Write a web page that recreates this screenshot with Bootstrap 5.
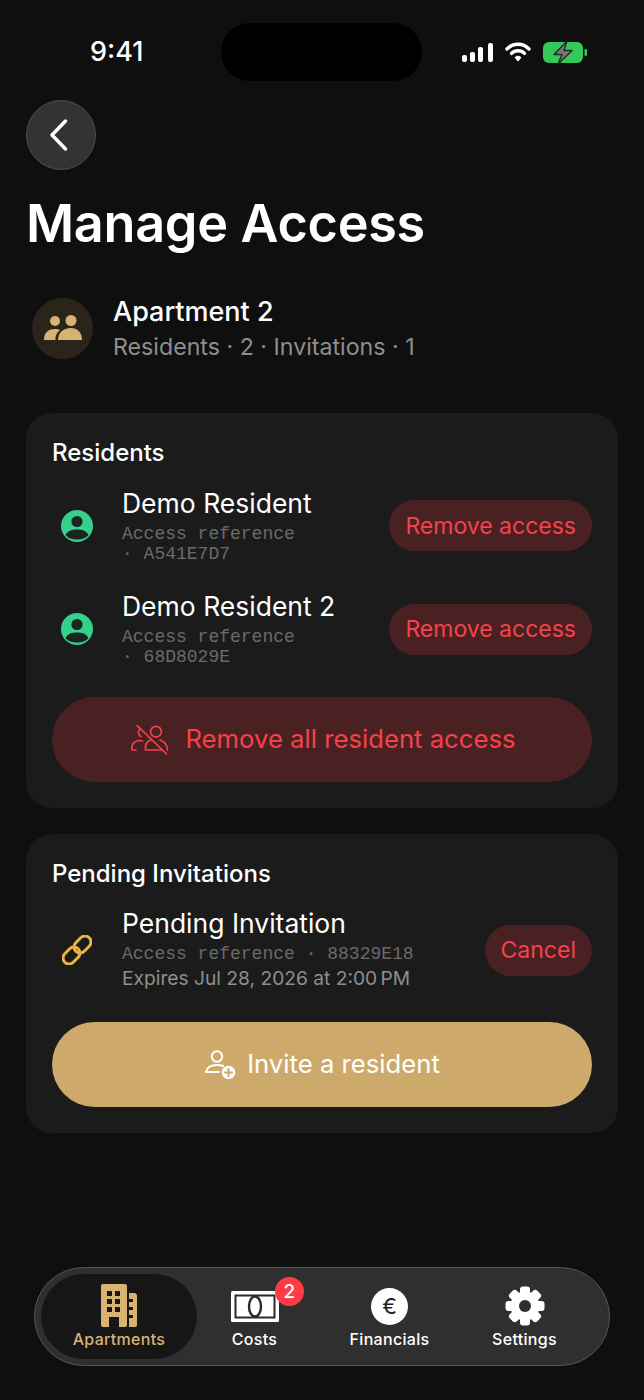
<!DOCTYPE html>
<html lang="en">
<head>
  <meta charset="UTF-8" />
  <meta name="viewport" content="width=device-width, initial-scale=1.0"/>
  <title>Manage Access</title>
  <link href="https://cdn.jsdelivr.net/npm/bootstrap@5.3.0/dist/css/bootstrap.min.css" rel="stylesheet"/>
  <style>
    body {
      background-color: #0f0f0f;
      font-family: Inter, "Liberation Sans", sans-serif;
      color: #fff;
    }
    .phone-page { width: 644px; height: 1400px; overflow: hidden; }
    .status-row { height: 100px; padding: 23px 0 0 90px; }
    .status-time { width: 131px; height: 58px; line-height: 58px; font-size: 27px; font-weight: 500; }
    .status-island { width: 201px; height: 58px; background: #000; border-radius: 29px; }
    .status-icons { margin-left: 40px; height: 58px; gap: 12px; }
    .back-btn {
      width: 70px; height: 70px; margin-left: 26px; padding: 0 4px 0 0;
      background: #333; border: 1.5px solid #4e4e4e; border-radius: 50%;
    }
    .back-btn:hover { background: #333; border-color: #4e4e4e; }
    .page-title { font-size: 52.2px; line-height: 60px; font-weight: 600; margin: 23px 0 0 26px; letter-spacing: -.3px; color: #fff; }
    .apt-row { margin: 44px 0 0 32px; gap: 20px; height: 62px; }
    .apt-circle { width: 61px; height: 61px; background: #2a241b; border-radius: 50%; }
    .apt-text { padding-top: 1px; }
    .apt-name { font-size: 27px; line-height: 32px; font-weight: 500; }
    .apt-sub { font-size: 23.2px; line-height: 30px; margin-top: 4px; color: #8e8e8e; }
    .panel {
      margin: 0 26px; padding: 26px; background: #1b1b1b; border: 0; border-radius: 26px; color: #fff;
    }
    .panel-first { margin-top: 54px; height: 395px; }
    .panel-second { margin-top: 26px; height: 299px; }
    .panel-title { font-size: 24px; line-height: 28px; font-weight: 500; margin: 0 0 7px; }
    .access-row { height: 103.5px; gap: 20px; }
    .access-row .flex-grow-1 { padding-bottom: 1px; }
    .access-row-tall { height: 111px; }
    .access-icon { width: 50px; flex: none; }
    .access-name { font-size: 26.5px; line-height: 32px; margin-bottom: 5px; }
    .access-row-tall .flex-grow-1 { padding-bottom: 2px; }
    .access-ref {
      font-family: "Liberation Mono", monospace; font-size: 18px; line-height: 20px; color: #6a6a6a;
    }
    .access-exp { font-size: 19.2px; line-height: 25px; margin-top: 2px; color: #8e8e8e; }
    .danger-pill {
      height: 51px; padding: 0 16px; border: 0; border-radius: 26px; background: #4a2123; color: #f5424a;
      font-size: 23px; white-space: nowrap; flex: none;
    }
    .danger-pill:hover { background: #4a2123; color: #f5424a; }
    .wide-pill {
      height: 85px; border: 0; border-radius: 43px; font-size: 25.7px; gap: 16px;
    }
    .wide-danger, .wide-danger:hover { background: #4a2123; color: #f5424a; padding-left: 15px; }
    .wide-gold, .wide-gold:hover { background: #cdaa6b; color: #fff; gap: 11px; margin-top: 17px; }
    .tab-wrap { margin: auto 34px 34px; height: 99px; padding: 6px; background: #2f2f2f; border: 1.5px solid #555; border-radius: 50px; }
    .tab-item { position: relative; height: 100%; font-size: 16px; font-weight: 500; letter-spacing: .3px; color: #fff; padding-bottom: 10px; }
    .tab-active { width: 156px; background: #161616; border-radius: 43px; color: #d8b271; }
    .tab-plain { width: 135px; }
    .tab-shift { margin-left: -10px; }
    .tab-icon { height: 44px; margin-bottom: 1px; }
    .tab-label { line-height: 20px; }
    .tab-badge {
      position: absolute; top: 3px; left: 88px; width: 29px; height: 29px; padding: 0; line-height: 29px;
      background: #ff3b45; border-radius: 50%; font-size: 19px; font-weight: 500;
    }
    .euro-circle {
      width: 37px; height: 37px; background: #fff; border-radius: 50%; color: #222; font-size: 22px; font-weight: 400; line-height: 37px; letter-spacing: 0;
    }
  </style>
</head>
<body>
  <div class="phone-page d-flex flex-column">
    <div class="status-row d-flex">
      <div class="status-time">9:41</div>
      <div class="status-island"></div>
      <div class="status-icons d-flex align-items-center">
        <svg width="31" height="20" viewBox="0 0 31 20" fill="#fff">
          <rect x="0" y="13" width="5" height="7" rx="2"/>
          <rect x="8" y="10" width="5" height="10" rx="2"/>
          <rect x="16" y="5" width="5" height="15" rx="2"/>
          <rect x="26" y="1" width="5" height="19" rx="2"/>
        </svg>
        <svg width="26" height="20" viewBox="0 0 26 20" fill="none" stroke="#fff" stroke-width="3.4" stroke-linecap="round">
          <path d="M2 7 C8 .6 18 .6 24 7"/>
          <path d="M6.5 11.4 C10 7.8 16 7.8 19.5 11.4"/>
          <path d="M13 18.4 L10.6 15.6 C12 14.4 14 14.4 15.4 15.6 Z" fill="#fff" stroke-width="1.6" stroke-linejoin="round"/>
        </svg>
        <svg width="44" height="23" viewBox="0 0 44 23">
          <rect x="0" y="1" width="40" height="21" rx="6" fill="#34c759"/>
          <rect x="41.5" y="8" width="2.5" height="7" rx="1.2" fill="#34c759"/>
          <path d="M24 0 L11 13.5 H19 L15 23 L29 9.5 H21 Z" fill="#77797a" stroke="#1d2a20" stroke-width="1.4" stroke-linejoin="round"/>
        </svg>
      </div>
    </div>

    <div>
      <button class="btn back-btn d-flex align-items-center justify-content-center" type="button" aria-label="Back">
        <svg width="20" height="32" viewBox="0 0 20 32" fill="none" stroke="#fff" stroke-width="3.4" stroke-linecap="round" stroke-linejoin="round">
          <path d="M16.5 2 L3 16 L16.5 30"/>
        </svg>
      </button>
    </div>

    <h1 class="page-title">Manage Access</h1>

    <div class="apt-row d-flex align-items-center">
      <div class="apt-circle d-flex align-items-center justify-content-center">
        <svg width="38" height="26" viewBox="0 0 38 26" fill="#d8b271">
          <circle cx="11" cy="6" r="5"/>
          <circle cx="27" cy="5.5" r="5.5"/>
          <path d="M0 25 C0 17 5 14 11 14 C13 14 15 14.5 16 15 C12.5 18 11 21 11.5 25 Z"/>
          <path d="M14 25 C14 17 20 13 27 13 C33 13 38 17 38 25 Z"/>
        </svg>
      </div>
      <div class="apt-text">
        <div class="apt-name">Apartment 2</div>
        <div class="apt-sub">Residents · 2 · Invitations · 1</div>
      </div>
    </div>

    <div class="card panel panel-first">
      <h2 class="panel-title">Residents</h2>
      <div class="access-row d-flex align-items-center">
        <div class="access-icon d-flex justify-content-center">
          <svg width="32" height="32" viewBox="0 0 32 32">
            <circle cx="16" cy="16" r="16" fill="#34d08c"/>
            <circle cx="16" cy="11.5" r="5.6" fill="#1b2420"/>
            <path d="M4.5 25 C7 20.5 11 19.5 16 19.5 C21 19.5 25 20.5 27.5 25 C24.5 28.5 20.5 29.5 16 29.5 C11.5 29.5 7.5 28.5 4.5 25 Z" fill="#1b2420"/>
          </svg>
        </div>
        <div class="flex-grow-1">
          <div class="access-name">Demo Resident</div>
          <div class="access-ref">Access reference<br>· A541E7D7</div>
        </div>
        <button class="btn danger-pill" type="button">Remove access</button>
      </div>
      <div class="access-row d-flex align-items-center">
        <div class="access-icon d-flex justify-content-center">
          <svg width="32" height="32" viewBox="0 0 32 32">
            <circle cx="16" cy="16" r="16" fill="#34d08c"/>
            <circle cx="16" cy="11.5" r="5.6" fill="#1b2420"/>
            <path d="M4.5 25 C7 20.5 11 19.5 16 19.5 C21 19.5 25 20.5 27.5 25 C24.5 28.5 20.5 29.5 16 29.5 C11.5 29.5 7.5 28.5 4.5 25 Z" fill="#1b2420"/>
          </svg>
        </div>
        <div class="flex-grow-1">
          <div class="access-name">Demo Resident 2</div>
          <div class="access-ref">Access reference<br>· 68D8029E</div>
        </div>
        <button class="btn danger-pill" type="button">Remove access</button>
      </div>
      <button class="btn wide-pill wide-danger d-flex align-items-center justify-content-center w-100 mt-3" type="button">
        <svg width="38" height="30" viewBox="0 0 38 30" fill="none" stroke="#f5424a" stroke-width="1.7" stroke-linecap="round" stroke-linejoin="round">
          <circle cx="25" cy="6.7" r="5.4"/>
          <path d="M8.5 4.5 A4.5 4.5 0 0 0 10 11.5"/>
          <path d="M5 25 H1 C0 20 3 16 8 15.5 C9.5 15.5 10.5 15.7 11.5 16"/>
          <path d="M20 15 C16 16 14 20 14.5 25 H31"/>
          <path d="M29 15 C33 16.5 36.5 20 36.5 25"/>
          <path d="M6 .5 L35.5 29"/>
        </svg>
        <span>Remove all resident access</span>
      </button>
    </div>

    <div class="card panel panel-second">
      <h2 class="panel-title">Pending Invitations</h2>
      <div class="access-row access-row-tall d-flex align-items-center">
        <div class="access-icon d-flex justify-content-center">
          <svg width="30" height="30" viewBox="0 0 30 30" fill="none" stroke="#e8b53e" stroke-width="3">
            <rect x="-9.5" y="-6" width="19" height="12" rx="6" transform="translate(9.5 20.5) rotate(-45)"/>
            <rect x="-9.5" y="-6" width="19" height="12" rx="6" transform="translate(20.5 9.5) rotate(-45)"/>
          </svg>
        </div>
        <div class="flex-grow-1">
          <div class="access-name">Pending Invitation</div>
          <div class="access-ref">Access reference · 88329E18</div>
          <div class="access-exp">Expires Jul 28, 2026 at 2:00&#8239;PM</div>
        </div>
        <button class="btn danger-pill" type="button">Cancel</button>
      </div>
      <button class="btn wide-pill wide-gold d-flex align-items-center justify-content-center w-100" type="button">
        <svg width="32" height="30" viewBox="0 0 32 30" fill="none" stroke="#fff" stroke-width="2" stroke-linecap="round">
          <circle cx="13" cy="6.5" r="5.2"/>
          <path d="M2 22 C3 17 7 15 13 15 C15.5 15 17.5 15.3 19 16"/>
          <path d="M2 22 H15"/>
          <circle cx="24.5" cy="22.5" r="6.8" fill="#fff" stroke="none"/>
          <path d="M24.5 19 V26 M21 22.5 H28" stroke="#cdaa6b"/>
        </svg>
        <span>Invite a resident</span>
      </button>
    </div>

    <nav class="tab-wrap d-flex align-items-center">
      <div class="tab-item tab-active d-flex flex-column align-items-center justify-content-end">
        <div class="tab-icon">
          <svg width="37" height="44" viewBox="0 0 37 44" fill="#d8b271">
            <path fill-rule="evenodd" d="M2 0 H24 A2 2 0 0 1 26 2 V41 A2 2 0 0 1 24 43 H2 A2 2 0 0 1 0 41 V2 A2 2 0 0 1 2 0 Z M6 7 V12 H11 V7 Z M14 7 V12 H19 V7 Z M6 15 V20 H11 V15 Z M14 15 V20 H19 V15 Z M6 23 V28 H11 V23 Z M14 23 V28 H19 V23 Z M8 33 V43 H18 V33 Z"/>
            <path d="M28 9 H33 A3 3 0 0 1 36 12 V41 A2 2 0 0 1 34 43 H28 V34 H32 V31 H28 V26 H32 V23 H28 V18 H32 V15 H28 Z"/>
          </svg>
        </div>
        <div class="tab-label">Apartments</div>
      </div>
      <div class="tab-item tab-plain tab-shift d-flex flex-column align-items-center justify-content-end">
        <div class="tab-icon d-flex align-items-center">
          <svg width="48" height="31" viewBox="0 0 48 31">
            <rect width="48" height="31" rx="1.5" fill="#fff"/>
            <rect x="4.5" y="4.5" width="39" height="22" fill="none" stroke="#2a2a2a" stroke-width="2"/>
            <ellipse cx="24" cy="15.5" rx="6" ry="10" fill="none" stroke="#2a2a2a" stroke-width="2.4"/>
          </svg>
        </div>
        <div class="tab-label">Costs</div>
        <span class="badge tab-badge">2</span>
      </div>
      <div class="tab-item tab-plain d-flex flex-column align-items-center justify-content-end">
        <div class="tab-icon d-flex align-items-center">
          <div class="euro-circle text-center">€</div>
        </div>
        <div class="tab-label">Financials</div>
      </div>
      <div class="tab-item tab-plain d-flex flex-column align-items-center justify-content-end">
        <div class="tab-icon d-flex align-items-center">
          <svg width="40" height="40" viewBox="-20 -20 40 40" fill="#fff">
            <circle r="14.5"/>
            <rect x="-5" y="-19.5" width="10" height="39" rx="3"/>
            <rect x="-5" y="-19.5" width="10" height="39" rx="3" transform="rotate(45)"/>
            <rect x="-5" y="-19.5" width="10" height="39" rx="3" transform="rotate(90)"/>
            <rect x="-5" y="-19.5" width="10" height="39" rx="3" transform="rotate(135)"/>
            <circle r="6" fill="#2f2f2f"/>
          </svg>
        </div>
        <div class="tab-label">Settings</div>
      </div>
    </nav>
  </div>
  <script src="https://cdn.jsdelivr.net/npm/bootstrap@5.3.0/dist/js/bootstrap.bundle.min.js"></script>
</body>
</html>
